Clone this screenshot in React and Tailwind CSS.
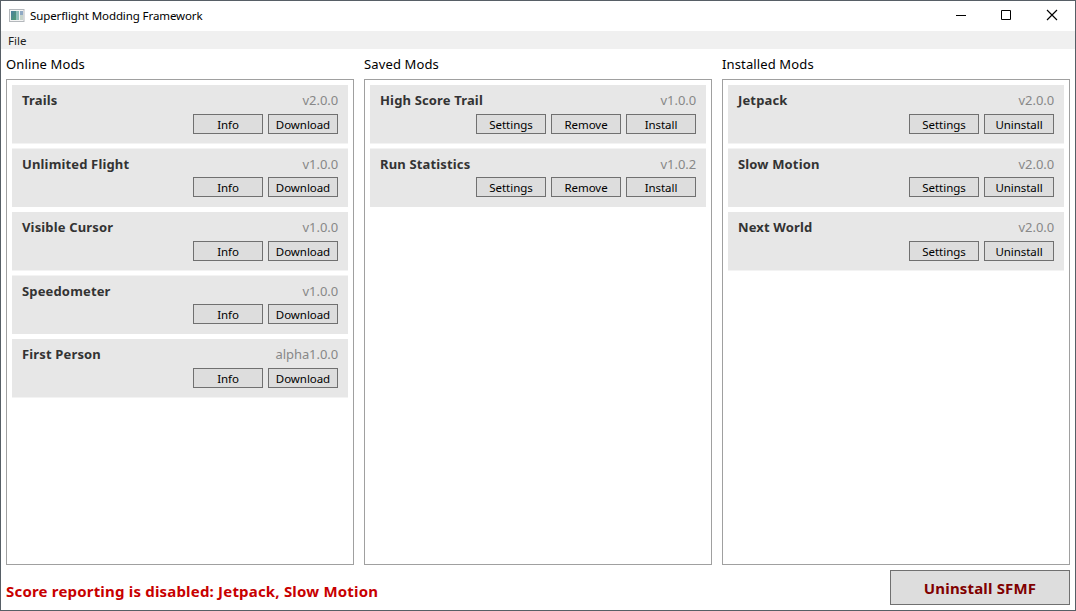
const online = [
  ["Trails", "v2.0.0"],
  ["Unlimited Flight", "v1.0.0"],
  ["Visible Cursor", "v1.0.0"],
  ["Speedometer", "v1.0.0"],
  ["First Person", "alpha1.0.0"],
];
const saved = [
  ["High Score Trail", "v1.0.0"],
  ["Run Statistics", "v1.0.2"],
];
const installed = [
  ["Jetpack", "v2.0.0"],
  ["Slow Motion", "v2.0.0"],
  ["Next World", "v2.0.0"],
];

function ModCard({ name, version, actions, odd }) {
  return (
    <div
      className={
        "flex h-[59px] flex-col bg-[#e7e7e7] px-2.5 pt-[6px] " +
        (odd ? "mb-[5px] border-t border-[#f3f3f3]" : "mb-1 border-b border-[#f3f3f3]")
      }
    >
      <div className="flex h-[19px] justify-between text-[13px] leading-[19px]">
        <span className="font-bold tracking-[0.15px] text-[#333]">{name}</span>
        <span className="tracking-[-0.08px] text-[#888]">{version}</span>
      </div>
      <div className={"flex justify-end gap-[5px] " + (odd ? "mt-[3px]" : "mt-1")}>
        {actions.map((a) => (
          <button
            key={a}
            className="h-5 w-[70px] border border-[#707070] bg-[#ddd] text-[11.5px] leading-[19px] tracking-[-0.05px] text-black"
          >
            {a}
          </button>
        ))}
      </div>
    </div>
  );
}

function Column({ title, mods, actions }) {
  return (
    <section className="flex w-[348px] flex-col">
      <h2 className="h-[30px] pt-[5px] text-[13px] leading-5 tracking-[0.13px] text-black">{title}</h2>
      <div className="h-[486px] border border-[#a0a0a0] p-[5px]">
        {mods.map(([name, version], i) => (
          <ModCard key={name} name={name} version={version} actions={actions} odd={i % 2 === 1} />
        ))}
      </div>
    </section>
  );
}

export default function App() {
  return (
    <div className="flex h-[611px] w-[1076px] flex-col overflow-hidden border border-[#575f66] bg-white font-['Noto_Sans','Open_Sans',sans-serif] whitespace-nowrap">
      <header className="flex h-[30px] items-center justify-between pl-2">
        <div className="flex items-center gap-[5px]">
          <svg width="16" height="14" viewBox="0 0 16 14">
            <defs>
              <linearGradient id="pane" x1="0" y1="0" x2="1" y2="1">
                <stop offset="0" stopColor="#4a7fa0" />
                <stop offset="1" stopColor="#4f9a70" />
              </linearGradient>
            </defs>
            <rect x="0.5" y="0.5" width="14.500" height="12" fill="#f4f4f4" stroke="#b4b8bc" />
            <rect x="2" y="2" width="5" height="9" fill="url(#pane)" />
            <rect x="7" y="2" width="3" height="9" fill="#8dbcb8" />
            <rect x="11" y="2" width="3" height="4" fill="#8fa9c4" />
            <rect x="11" y="6" width="3" height="5" fill="#c5d3cb" />
          </svg>
          <span className="text-[11.5px] leading-4 tracking-[-0.1px] text-black">Superflight Modding Framework</span>
        </div>
        <svg width="138" height="30" viewBox="0 0 138 30" fill="none" stroke="#000" className="shrink-0">
          <path d="M19 14.5h10" />
          <path d="M64.500 9.500h9v9h-9z" />
          <path d="M110 9l10 10M120 9l-10 10" strokeWidth="1.15" />
        </svg>
      </header>
      <nav className="flex h-[18px] items-center bg-[#f0f0f0] pt-px pl-[7px] text-[11.5px] text-[#222]">File</nav>
      <main className="flex gap-2.5 pl-[5px]">
        <Column title="Online Mods" mods={online} actions={["Info", "Download"]} />
        <Column title="Saved Mods" mods={saved} actions={["Settings", "Remove", "Install"]} />
        <Column title="Installed Mods" mods={installed} actions={["Settings", "Uninstall"]} />
      </main>
      <footer className="flex items-start justify-between pt-[5px] pr-[5px] pl-[5px]">
        <p className="pt-[11px] text-[15px] leading-5 font-bold tracking-[0.19px] text-[#c80000]">
          Score reporting is disabled: Jetpack, Slow Motion
        </p>
        <button className="h-[35px] w-[180px] border border-[#707070] bg-[#ddd] pt-0.5 text-[15px] font-bold tracking-[0.16px] text-[#800000]">
          Uninstall SFMF
        </button>
      </footer>
    </div>
  );
}
